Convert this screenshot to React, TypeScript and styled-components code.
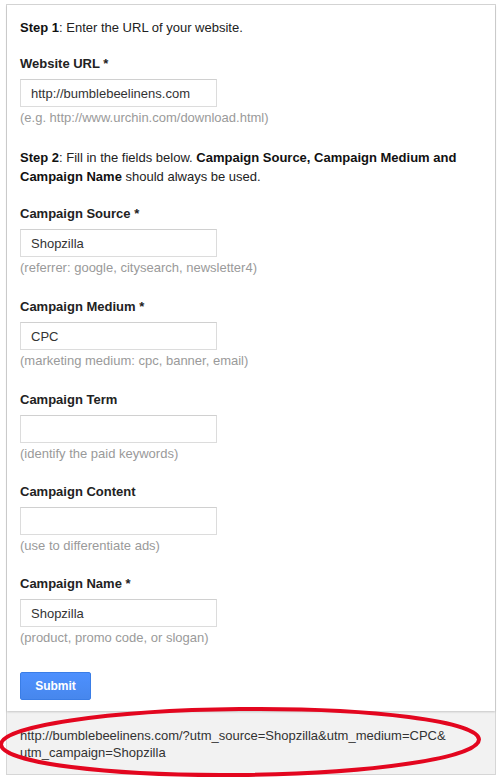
import styled, { createGlobalStyle } from 'styled-components';

const GlobalStyle = createGlobalStyle`
  html, body {
    margin: 0;
    padding: 0;
    background: #fff;
  }
  body {
    font-family: "Liberation Sans", Arial, sans-serif;
    font-size: 13px;
    color: #222;
  }
`;

const ScPage = styled.div`
  position: relative;
  width: 500px;
  height: 778px;
  padding: 4px 0 0 6px;
  box-sizing: border-box;
`;

const ScFrame = styled.div`
  width: 490px;
  box-sizing: border-box;
  border: 1px solid #d6d6d6;
  background: #f2f2f2;
`;

const ScPanel = styled.form`
  background: #fff;
  padding: 13px 13px 11px;
  box-shadow: 0 1px 2px rgba(0, 0, 0, 0.18);
  position: relative;
`;

const ScStep = styled.p<{ $top?: number }>`
  margin: ${(p) => p.$top ?? 0}px 0 0;
  line-height: 19px;
  color: #222;

  b {
    font-weight: bold;
    color: #111;
  }
`;

const ScField = styled.div<{ $top: number }>`
  display: flex;
  flex-direction: column;
  align-items: flex-start;
  margin-top: ${(p) => p.$top}px;
`;

const ScLabel = styled.label`
  font-weight: bold;
  line-height: 18px;
  color: #222;
`;

const ScInput = styled.input`
  margin-top: 6px;
  width: 197px;
  height: 28px;
  box-sizing: border-box;
  border: 1px solid #dcdcdc;
  border-top-color: #d0d0d0;
  padding: 0 10px;
  font-family: inherit;
  font-size: 13px;
  color: #333;
  outline: none;
`;

const ScHint = styled.span`
  margin-top: 2px;
  line-height: 18px;
  color: #9a9a9a;
`;

const ScButton = styled.button`
  margin-top: 25px;
  width: 71px;
  height: 28px;
  border: 1px solid #3a7de6;
  border-radius: 2px;
  background: linear-gradient(#4d90fe, #4787ed);
  color: #fff;
  font-family: inherit;
  font-size: 12px;
  font-weight: bold;
  padding: 0;
`;

const ScResult = styled.div`
  padding: 16px 13px 13px;
  line-height: 17px;
  color: #333;
  font-size: 13px;
`;

const ScCircle = styled.svg`
  position: absolute;
  top: 0;
  left: 0;
  pointer-events: none;
`;

type FieldProps = {
  label: string;
  value?: string;
  hint: string;
  top: number;
};

const Field = ({ label, value = '', hint, top }: FieldProps) => (
  <ScField $top={top}>
    <ScLabel>{label}</ScLabel>
    <ScInput defaultValue={value} />
    <ScHint>{hint}</ScHint>
  </ScField>
);

export default function App() {
  return (
    <ScPage>
      <GlobalStyle />
      <ScFrame>
        <ScPanel onSubmit={(e) => e.preventDefault()}>
          <ScStep>
            <b>Step 1</b>: Enter the URL of your website.
          </ScStep>
          <Field
            top={18}
            label="Website URL *"
            value="http://bumblebeelinens.com"
            hint="(e.g. http://www.urchin.com/download.html)"
          />
          <ScStep $top={21}>
            <b>Step 2</b>: Fill in the fields below. <b>Campaign Source, Campaign Medium and Campaign Name</b> should
            always be used.
          </ScStep>
          <Field
            top={19}
            label="Campaign Source *"
            value="Shopzilla"
            hint="(referrer: google, citysearch, newsletter4)"
          />
          <Field
            top={21}
            label="Campaign Medium *"
            value="CPC"
            hint="(marketing medium: cpc, banner, email)"
          />
          <Field top={21} label="Campaign Term" hint="(identify the paid keywords)" />
          <Field top={20} label="Campaign Content" hint="(use to differentiate ads)" />
          <Field
            top={20}
            label="Campaign Name *"
            value="Shopzilla"
            hint="(product, promo code, or slogan)"
          />
          <ScButton type="submit">Submit</ScButton>
        </ScPanel>
        <ScResult>
          http://bumblebeelinens.com/?utm_source=Shopzilla&amp;utm_medium=CPC&amp;
          <wbr />
          utm_campaign=Shopzilla
        </ScResult>
      </ScFrame>
      <ScCircle width="500" height="778" viewBox="0 0 500 778">
        <ellipse
          cx="240"
          cy="742"
          rx="239"
          ry="33"
          fill="none"
          stroke="#e3061f"
          strokeWidth="4"
          transform="rotate(-0.6 240 742)"
        />
      </ScCircle>
    </ScPage>
  );
}
